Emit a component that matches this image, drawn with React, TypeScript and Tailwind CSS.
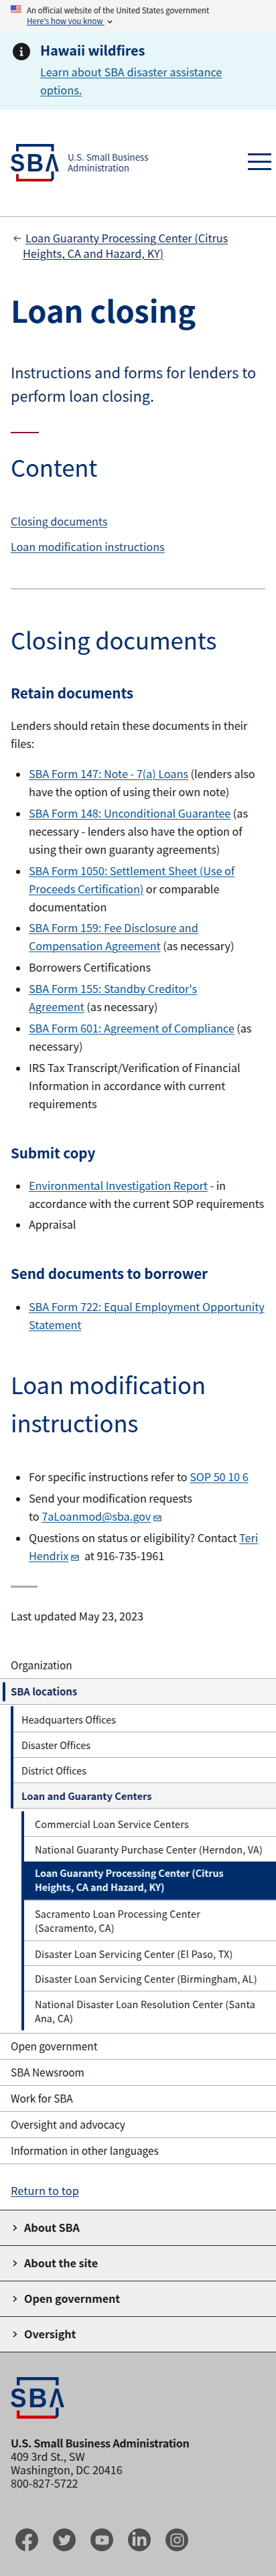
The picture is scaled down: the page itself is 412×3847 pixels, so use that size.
import React from "react";
import { FaFacebookF, FaInstagram, FaLinkedinIn, FaTwitter, FaYoutube } from "react-icons/fa";

const linkClass = "text-[#0a5796] underline decoration-1 underline-offset-2";

function Logo({ className }: { className: string }) {
  return (
    <svg viewBox="0 0 72 56" className={className} role="img">
      <path d="M10 11V2H62.5V11" fill="none" stroke="#002e6d" strokeWidth="4" />
      <path d="M10 45V54H61" fill="none" stroke="#cc0000" strokeWidth="4" />
      <path d="M60.5 41H64.5V52.5L61 56L59.5 54L60.5 52Z" fill="#002e6d" />
      <g fill="#002e6d" fontFamily="Liberation Sans" fontWeight="700" fontSize="36">
        <text x="-1" y="41" textLength="22" lengthAdjust="spacingAndGlyphs">S</text>
        <text x="23.5" y="41" textLength="25.5" lengthAdjust="spacingAndGlyphs">B</text>
        <text x="51.5" y="41" textLength="20.5" lengthAdjust="spacingAndGlyphs">Λ</text>
      </g>
    </svg>
  );
}

function Flag() {
  return (
    <svg viewBox="0 0 16 11" className="mt-[1px] h-[11px] w-4 shrink-0">
      <rect width="16" height="11" fill="#fff" />
      {[0, 2, 4, 6, 8, 10].map((y) => (
        <rect key={y} y={y} width="16" height="1" fill="#db3e1f" />
      ))}
      <rect width="8" height="7" fill="#1e33b1" />
      {[1, 3, 5].map((y) =>
        [1, 3, 5, 7].map((x) => <rect key={`${x}-${y}`} x={x - 0.4} y={y} width="0.9" height="0.9" fill="#fff" />)
      )}
    </svg>
  );
}

function Mail() {
  return (
    <svg viewBox="0 0 12 9" className="ml-1 inline-block h-[9px] w-3 align-[-1px]" fill="none" stroke="#4a7aa8" strokeWidth="1.6">
      <rect x="0.8" y="0.8" width="10.4" height="7.4" rx="0.8" />
      <path d="M1.5 2L6 5.4L10.5 2" />
    </svg>
  );
}

function A({ children }: { children: React.ReactNode }) {
  return <a className={linkClass}>{children}</a>;
}

function Bullets({ items }: { items: React.ReactNode[] }) {
  return (
    <ul className="flex flex-col gap-[4.8px]">
      {items.map((item, i) => (
        <li key={i} className="flex whitespace-nowrap">
          <span className="mt-[12px] mr-[13px] ml-2 size-1.5 shrink-0 rounded-full bg-[#1b1b1b]" />
          <div>{item}</div>
        </li>
      ))}
    </ul>
  );
}

function H2({ children }: { children: React.ReactNode }) {
  return <h2 className="text-[34.4px] leading-[57px] whitespace-nowrap text-[#002e6d]">{children}</h2>;
}

function H3({ children }: { children: React.ReactNode }) {
  return <h3 className="text-[20.5px] leading-[34px] font-bold whitespace-nowrap text-[#002e6d]">{children}</h3>;
}

function NavRow({ children }: { children: React.ReactNode }) {
  return (
    <li className="flex h-[39px] items-center border-b border-[#b0b0b0] pb-0.5 pl-4 text-[15.35px]">{children}</li>
  );
}

export default function App() {
  return (
    <div className="w-[412px] overflow-hidden bg-white font-['Noto_Sans_CJK_KR','Noto_Sans',sans-serif] text-[16.15px] leading-[27px] text-[#1b1b1b]">
      <div className="flex h-12 bg-[#f4f4f4] pt-[7px] pl-4 text-[11.49px] leading-4">
        <Flag />
        <div className="ml-2 whitespace-nowrap">
          <p>An official website of the United States government</p>
          <p className="flex items-center">
            <a className="whitespace-pre text-[#0c3a80] underline decoration-1 underline-offset-1">{"Here’s how you know "}</a>
            <svg viewBox="0 0 8 5" className="mt-0.5 ml-1 h-[5px] w-2" fill="none" stroke="#333" strokeWidth="1.5">
              <path d="M0.7 0.7L4 4L7.3 0.7" />
            </svg>
          </p>
        </div>
      </div>

      <section className="flex h-[115.5px] bg-[#e7f6f8] pt-[13px] pl-[19px]">
        <svg viewBox="0 0 26 26" className="mt-[3px] size-[26px] shrink-0">
          <circle cx="13" cy="13" r="13" fill="#1b1b1b" />
          <rect x="11.5" y="6.5" width="2.8" height="2.6" fill="#e7f6f8" />
          <path d="M10.3 11h4v6.8h1.5v1.6h-5.3v-1.6h1.3v-5.2h-1.5z" fill="#e7f6f8" />
        </svg>
        <div className="ml-[15px] whitespace-nowrap">
          <h2 className="text-[19.73px] leading-[27px] font-bold text-[#002e6d]">Hawaii wildfires</h2>
          <a className="mt-1.5 block tracking-[0.09px] text-[#0b5b92] underline decoration-1 underline-offset-2">
            Learn about SBA disaster assistance
            <br />
            options.
          </a>
        </div>
      </section>

      <header className="flex h-[160.5px] items-center border-b border-[#b0b0b0] pr-[7px] pl-4">
        <Logo className="h-14 w-[72px] overflow-visible" />
        <p className="ml-[13px] text-[13.3px] leading-4 text-[#233a70]">
          U.S. Small Business
          <br />
          Administration
        </p>
        <div className="mb-1 ml-auto flex w-[35.5px] flex-col gap-2">
          <span className="h-[3px] bg-[#002e6d]" />
          <span className="h-[3px] bg-[#002e6d]" />
          <span className="h-[3px] bg-[#002e6d]" />
        </div>
      </header>

      <main className="px-4">
        <nav className="flex pt-5 leading-[23px] whitespace-nowrap">
          <svg viewBox="0 0 12 10" className="mt-[7px] ml-1 h-2.5 w-[11px] shrink-0" fill="none" stroke="#555" strokeWidth="1.5">
            <path d="M12 5H1.2M5.2 1L1.2 5L5.2 9" />
          </svg>
          <a className="ml-[3px] pl-1 text-[#112f5e] underline decoration-1 underline-offset-2">
            Loan Guaranty Processing Center (Citrus
            <br />
            <span className="-ml-1 tracking-[0.1px]">Heights, CA and Hazard, KY)</span>
          </a>
        </nav>

        <h1 className="mt-[46px] text-[45px] leading-[54px] font-bold whitespace-nowrap text-[#002e6d]">Loan closing</h1>
        <p className="mt-12 text-[21.65px] leading-[35px] whitespace-nowrap text-[#112f5e]">
          Instructions and forms for lenders to
          <br />
          perform loan closing.
        </p>
        <div className="mt-[37px] mb-[22px] h-0.5 w-[42px] bg-[#8b1a2f]" />

        <H2>Content</H2>
        <div className="mt-[39px] flex flex-col items-start gap-[11px] whitespace-nowrap">
          <a className="text-[#1a4a7c] underline decoration-1 underline-offset-2">Closing documents</a>
          <a className="text-[#1a4a7c] underline decoration-1 underline-offset-2">Loan modification instructions</a>
        </div>
        <div className="mt-[49px] mb-[47px] h-px bg-[#8f8f8f]" />

        <H2>Closing documents</H2>
        <div className="h-[33px]" />
        <H3>Retain documents</H3>
        <p className="mt-[19px] mb-[18px] whitespace-nowrap">
          Lenders should retain these documents in their
          <br />
          files:
        </p>
        <Bullets
          items={[
            <>
              <A>SBA Form 147: Note - 7(a) Loans</A> (lenders also
              <br />
              have the option of using their own note)
            </>,
            <>
              <A>SBA Form 148: Unconditional Guarantee</A> (as
              <br />
              necessary - lenders also have the option of
              <br />
              using their own guaranty agreements)
            </>,
            <>
              <A>
                SBA Form 1050: Settlement Sheet (Use of
                <br />
                Proceeds Certification)
              </A>{" "}
              or comparable
              <br />
              documentation
            </>,
            <>
              <A>
                SBA Form 159: Fee Disclosure and
                <br />
                Compensation Agreement
              </A>{" "}
              (as necessary)
            </>,
            <>Borrowers Certifications</>,
            <>
              <A>
                SBA Form 155: Standby Creditor's
                <br />
                Agreement
              </A>{" "}
              (as necessary)
            </>,
            <>
              <A>SBA Form 601: Agreement of Compliance</A> (as
              <br />
              necessary)
            </>,
            <>
              IRS Tax Transcript/Verification of Financial
              <br />
              Information in accordance with current
              <br />
              requirements
            </>,
          ]}
        />

        <div className="h-[42px]" />
        <H3>Submit copy</H3>
        <div className="h-[19px]" />
        <Bullets
          items={[
            <>
              <A>Environmental Investigation Report</A> - in
              <br />
              accordance with the current SOP requirements
            </>,
            <>Appraisal</>,
          ]}
        />

        <div className="h-[42px]" />
        <H3>Send documents to borrower</H3>
        <div className="h-[20px]" />
        <Bullets
          items={[
            <A>
              SBA Form 722: Equal Employment Opportunity
              <br />
              Statement
            </A>,
          ]}
        />

        <div className="h-[47px]" />
        <H2>
          Loan modification
          <br />
          instructions
        </H2>
        <div className="h-[38.6px]" />
        <Bullets
          items={[
            <>
              For specific instructions refer to <A>SOP 50 10 6</A>
            </>,
            <>
              Send your modification requests
              <br />
              to <A>7aLoanmod@sba.gov</A>
              <Mail />
            </>,
            <>
              Questions on status or eligibility? Contact{" "}
              <A>
                Teri
                <br />
                Hendrix
              </A>
              <Mail />
              <span className="ml-1"> at 916-735-1961</span>
            </>,
          ]}
        />
        <div className="mt-[31.6px] h-[3px] w-10 bg-[#a9a9a9]" />
        <p className="mt-[29px] mb-[41px]">Last updated May 23, 2023</p>
      </main>

      <ul className="whitespace-nowrap">
        <NavRow>Organization</NavRow>
        <li>
          <div className="flex h-[39px] items-center border-b border-[#b0b0b0] bg-[#f4f4f4] pl-1 text-[14.8px] font-bold text-[#162e60]">
            <span className="mr-2 h-[29px] w-1 rounded-full bg-[#002e6d]" />
            <span className="pb-0.5">SBA locations</span>
          </div>
          <ul className="mt-0.5 ml-4 rounded-l-[2px] border-l-4 border-[#002e6d] text-[14.3px] tracking-[0.05px]">
            <li className="flex h-[39px] items-center border-b border-[#b0b0b0] pl-3">Headquarters Offices</li>
            <li className="flex h-[38px] items-center border-b border-[#b0b0b0] pl-3">Disaster Offices</li>
            <li className="flex h-[38px] items-center border-b border-[#b0b0b0] pl-3">District Offices</li>
            <li className="flex h-[38px] items-center border-b border-[#b0b0b0] bg-[#f4f4f4] pl-3 text-[14.5px] font-bold text-[#162e60]">
              Loan and Guaranty Centers
            </li>
          </ul>
          <ul className="mt-1 ml-8 border-l-4 border-[#002e6d] text-[14.3px] leading-[21px] tracking-[0.22px]">
            <li className="flex h-[38px] items-center border-b border-[#b0b0b0] pl-4">Commercial Loan Service Centers</li>
            <li className="flex h-[37px] items-center pl-4">National Guaranty Purchase Center (Herndon, VA)</li>
            <li className="h-[59px] border-b-2 border-[#c0c6da] bg-[#002e6d] pt-[7px] pl-4 text-[14.2px] font-bold tracking-normal text-[#e6f3ff]">
              Loan Guaranty Processing Center (Citrus
              <br />
              Heights, CA and Hazard, KY)
            </li>
            <li className="h-[60px] border-b border-[#b0b0b0] pt-2 pl-4">
              Sacramento Loan Processing Center
              <br />
              (Sacramento, CA)
            </li>
            <li className="flex h-[37px] items-center border-b border-[#b0b0b0] pl-4">
              Disaster Loan Servicing Center (El Paso, TX)
            </li>
            <li className="flex h-[38px] items-center border-b border-[#b0b0b0] pl-4">
              Disaster Loan Servicing Center (Birmingham, AL)
            </li>
            <li className="h-[58px] pt-[7.5px] pl-4">
              National Disaster Loan Resolution Center (Santa
              <br />
              Ana, CA)
            </li>
          </ul>
          <div className="h-[5px] border-b border-[#b0b0b0]" />
        </li>
        <NavRow>Open government</NavRow>
        <NavRow>SBA Newsroom</NavRow>
        <NavRow>Work for SBA</NavRow>
        <NavRow>Oversight and advocacy</NavRow>
        <NavRow>Information in other languages</NavRow>
      </ul>

      <div className="mt-[26px] mb-[15px] pl-4">
        <a className="tracking-[0.2px] text-[#12386f] underline decoration-1 underline-offset-2">Return to top</a>
      </div>

      <footer>
        <ul>
          {["About SBA", "About the site", "Open government", "Oversight"].map((title) => (
            <li key={title} className="flex h-[53px] items-center border-t border-[#2b2b2b] bg-[#efefef] pb-0.5 pl-[19px] text-[16.1px] font-bold">
              <svg viewBox="0 0 7 10" className="mt-px mr-2.5 h-2.5 w-[7px]" fill="none" stroke="#1b1b1b" strokeWidth="1.7">
                <path d="M1 1L5.3 5L1 9" />
              </svg>
              {title}
            </li>
          ))}
        </ul>
        <div className="h-[335px] border-t border-[#2b2b2b] bg-[#c5c5c5] pt-[37px] pl-4">
          <Logo className="h-[62px] w-20 overflow-visible" />
          <address className="mt-[26px] text-[16.1px] leading-5 whitespace-nowrap not-italic">
            <strong className="tracking-[-0.29px]">U.S. Small Business Administration</strong>
            <br />
            409 3rd St., SW
            <br />
            Washington, DC 20416
            <br />
            800-827-5722
          </address>
          <div className="mt-[58px] ml-[7px] flex gap-[22px] text-[#c5c5c5]">
            <span className="flex size-[34px] items-end justify-center overflow-hidden rounded-full bg-[#505050]">
              <FaFacebookF className="-mb-px h-[27px] w-[17px]" />
            </span>
            <span className="flex size-[34px] items-center justify-center rounded-full bg-[#505050]">
              <FaTwitter className="size-[19px]" />
            </span>
            <span className="flex size-[34px] items-center justify-center rounded-full bg-[#505050]">
              <FaYoutube className="size-[21px]" />
            </span>
            <span className="flex size-[34px] items-center justify-center rounded-full bg-[#505050]">
              <FaLinkedinIn className="size-[24px]" />
            </span>
            <span className="flex size-[34px] items-center justify-center rounded-full bg-[#505050]">
              <FaInstagram className="size-[23px]" />
            </span>
          </div>
        </div>
      </footer>
    </div>
  );
}
